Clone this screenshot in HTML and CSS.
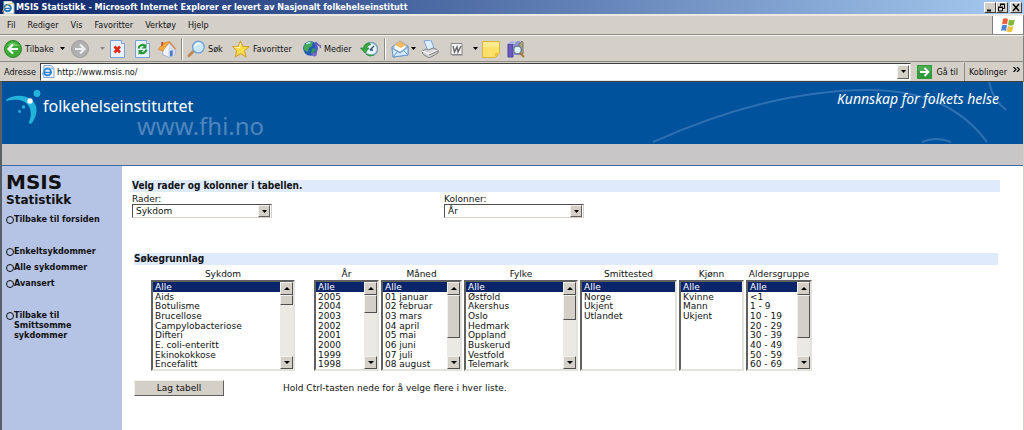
FILE: index.html
```html
<!DOCTYPE html>
<html lang="no">
<head>
<meta charset="utf-8">
<title>MSIS Statistikk</title>
<link rel="stylesheet" href="styles.css">
</head>
<body>
<div class="window">
<header class="titlebar">
  <svg class="title-icon" viewBox="0 0 14 14"><path d="M2 0h8l3 3v11H2z" fill="#fff" stroke="#8aa"/><circle cx="6" cy="7.500" r="3.500" fill="none" stroke="#2878c8" stroke-width="2"/><path d="M3 8h7" stroke="#2878c8" stroke-width="1.500"/><path d="M1 12C0 8 8 1 12 3" fill="none" stroke="#e8b840"/></svg>
  <h1 class="title">MSIS Statistikk - Microsoft Internet Explorer er levert av Nasjonalt folkehelseinstitutt</h1>
  <div class="window-buttons">
    <button class="winbtn" aria-label="Minimer"><svg viewBox="0 0 10 9"><path d="M2 7.500h4" stroke="#000" stroke-width="2"/></svg></button>
    <button class="winbtn" aria-label="Gjenopprett"><svg viewBox="0 0 10 9"><path d="M3.500 3V1.500h4v4H6M1.500 4.500h4v3.500h-4zM1 4h5M3 1h5" fill="none" stroke="#000"/></svg></button>
    <button class="winbtn close" aria-label="Lukk"><svg viewBox="0 0 10 9"><path d="M2 1l6 7M8 1L2 8" stroke="#000" stroke-width="1.500"/></svg></button>
  </div>
</header>
<nav class="menubar">
  <button class="menu">Fil</button><button class="menu">Rediger</button><button class="menu">Vis</button><button class="menu">Favoritter</button><button class="menu">Verktøy</button><button class="menu">Hjelp</button>
  <div class="flag"><svg viewBox="0 0 16 16"><path d="M3 2q2-1.500 5 0L7 7.500q-3-1.500-5 0z" fill="#e8603a"/><path d="M9 2.500q3 1.500 6 0L13.500 8q-3 1.500-5.500 0z" fill="#80b840"/><path d="M2 8.500q2-1.500 5 0L6 14q-3-1.500-5 0z" fill="#4c84d8"/><path d="M8 9q2.500 1.500 5.500 0L12 14.500q-3 1.500-5.500 0z" fill="#f0c040"/></svg></div>
</nav>
<div class="toolbar">
  <button class="tool"><svg viewBox="0 0 18 18"><circle cx="9" cy="9" r="8.500" fill="#3dab35" stroke="#2a8428"/><path d="M3 6q5-7 12 0" fill="#8bd67c" opacity=".6"/><path d="M14 9H5M9 4.500L4.500 9 9 13.500" fill="none" stroke="#fff" stroke-width="2.200"/></svg>Tilbake</button>
  <button class="tool drop" aria-label="Tilbake-meny"><svg viewBox="0 0 5 3"><path d="M0 0h5L2.500 3z"/></svg></button>
  <button class="tool" aria-label="Frem"><svg viewBox="0 0 18 18"><circle cx="9" cy="9" r="8.500" fill="#b0b0b0" stroke="#9c9c9c"/><path d="M4 9h9M9 4.500L13.500 9 9 13.500" fill="none" stroke="#eee" stroke-width="2.200"/></svg></button>
  <button class="tool drop" aria-label="Frem-meny"><svg viewBox="0 0 5 3"><path d="M0 0h5L2.500 3z" fill="#888"/></svg></button>
  <button class="tool" aria-label="Stopp"><svg viewBox="0 0 18 18"><path d="M1.500.5h11l3 3v14h-14z" fill="#e9f3ff" stroke="#7a9fd4"/><path d="M12.500.5v3h3" fill="#fff" stroke="#7a9fd4"/><path d="M5.500 6.500l5.500 6M11 6.500l-5.500 6" stroke="#e02818" stroke-width="2.600"/></svg></button>
  <button class="tool" aria-label="Oppdater"><svg viewBox="0 0 18 18"><path d="M1.500.5h11l3 3v14h-14z" fill="#e9f3ff" stroke="#7a9fd4"/><path d="M12.500.5v3h3" fill="#fff" stroke="#7a9fd4"/><path d="M4.500 8.500C5 5 9 4 11 6M12.500 9.500C12 13 8 14 6 12.500" fill="none" stroke="#28983a" stroke-width="2.200"/><path d="M12.500 3.500v5h-5zM4.500 15v-5h5z" fill="#28983a"/></svg></button>
  <button class="tool" aria-label="Startside"><svg viewBox="0 0 19 18"><path d="M5 9l7-6 6 6v6l-7 2.500L5 15z" fill="#f2f6ff" stroke="#8296c4" stroke-width=".7"/><path d="M12 4l6 5.500V15l-7 2.500V10z" fill="#d0ddf6"/><path d="M0 9.500L6 2.500 12.500 1 7 8.500 5.500 11z" fill="#f5a83c" stroke="#d08028" stroke-width=".6"/><path d="M12 1.200l6.500 8" stroke="#e08a3c" stroke-width="1.500"/><path d="M12.500 11l3-.7v5.500l-3 1z" fill="#5479bd"/><path d="M3.500 1.500h2v3l-2 2z" fill="#b85038"/></svg></button>
  <span class="sep"></span>
  <button class="tool"><svg viewBox="0 0 19 18"><path d="M2 16l5.500-5.500" stroke="#c28a58" stroke-width="3" stroke-linecap="round"/><circle cx="12" cy="7" r="6.200" fill="#c9e8fb" stroke="#6d9ed4" stroke-width="1.300"/><path d="M8.500 6q2-4 6-2" fill="none" stroke="#fff" stroke-width="1.500"/></svg>Søk</button>
  <button class="tool"><svg viewBox="0 0 18 18"><path d="M8.500.8l2.300 5.600 6.400.3-4.800 4 1.800 6.500-5.500-3.600L3.200 17l1.500-6.300L.5 6.600l5.900-.4z" fill="#ffdc48" stroke="#cf9a24"/><path d="M8.500 3l-1 5-5-1" fill="none" stroke="#fff6b4"/></svg>Favoritter</button>
  <button class="tool"><svg viewBox="0 0 18 18"><circle cx="7.500" cy="8.500" r="7.300" fill="#2258b8"/><path d="M1 6q3-6 9-4l-1 4-3 2-1 4-4-2z" fill="#41a854"/><path d="M9 8l4 1-2 4-3 1z" fill="#2f9a50"/><path d="M3.500 4q2-2 4-1" stroke="#bfe8ff" stroke-width="1.500" fill="none"/><path d="M13 14V2q1 3 4.500 4v2" fill="none" stroke="#6a5cc0" stroke-width="1.600"/><ellipse cx="11.300" cy="14.500" rx="2.500" ry="2" fill="#7468cc"/></svg>Medier</button>
  <button class="tool" aria-label="Logg"><svg viewBox="0 0 18 18"><circle cx="11" cy="9" r="6.500" fill="#e6f3fb" stroke="#7aa2bc" stroke-width="1.500"/><path d="M10 3Q4 3 3.500 8H.5l4.500 5 4-5H6.500Q7 5 11 4.500M6 14q3 3.500 8 1" fill="#38a840" stroke="#2c8c38" stroke-width=".8"/><path d="M10 10l4-4M10 10h3" stroke="#34546c" stroke-width="1.300"/></svg></button>
  <span class="sep"></span>
  <button class="tool" aria-label="E-post"><svg viewBox="0 0 18 18"><path d="M1 7l8-6 8 5v9L2 17z" fill="#b4d8f8" stroke="#6a98d0"/><path d="M3 6l6-5 6 4v3l-6 4-6-3z" fill="#fff" stroke="#9ab"/><path d="M4 5l5-4 6 4-5 3z" fill="#f0b860"/><path d="M1 8l8 5 8-6v8L2 17z" fill="#d2eaff" stroke="#6a98d0"/><path d="M2 17l5-6M17 15l-5-5" stroke="#6a98d0"/></svg></button>
  <button class="tool drop" aria-label="E-postmeny"><svg viewBox="0 0 5 3"><path d="M0 0h5L2.500 3z"/></svg></button>
  <button class="tool" aria-label="Skriv ut"><svg viewBox="0 0 18 18"><path d="M3 1l7-1 3 8-6 3z" fill="#dceeff" stroke="#7ba4d8"/><path d="M1 11l4-2 2 1 5-2 5 2v3l-9 5-6-4z" fill="#d6d6d8" stroke="#808084"/><path d="M1 11l7 3 9-4" fill="none" stroke="#fff"/><path d="M8 15l9-4" stroke="#777"/></svg></button>
  <button class="tool" aria-label="Word"><svg viewBox="0 0 18 18"><path d="M3 3.500h11v11H3z" fill="#f5f5f5" stroke="#888"/><path d="M14.500 4.500v11H4" fill="none" stroke="#aaa"/><path d="M5 6l1.500 6L9 7l1 5 3-6" fill="none" stroke="#666" stroke-width="1.400"/></svg></button>
  <button class="tool drop" aria-label="Wordmeny"><svg viewBox="0 0 5 3"><path d="M0 0h5L2.500 3z"/></svg></button>
  <button class="tool" aria-label="Notat"><svg viewBox="0 0 18 18"><path d="M.5 1.500h17v12l-4 4H.5z" fill="#ffe069" stroke="#d9b23e"/><path d="M17 13l-4 4v-4z" fill="#efb93c"/><path d="M1 2h16v5H1z" fill="#fff3a8" opacity=".6"/></svg></button>
  <button class="tool" aria-label="Oppslag"><svg viewBox="0 0 18 18"><path d="M1 4h5v13H1z" fill="#6858c0" stroke="#4b4595"/><path d="M1 4l3-3h4L6 4z" fill="#a8b2e8"/><path d="M7 4l3-3h3v14H7z" fill="#8994d6"/><path d="M12 4l3-3 1 2v11h-4z" fill="#b0a070" stroke="#777"/><circle cx="10.500" cy="10" r="3.800" fill="#dff2ff" stroke="#687898" stroke-width="1.300"/><path d="M13 13l4 4" stroke="#a87830" stroke-width="2"/></svg></button>
</div>
<form class="addressbar">
  <label for="url">Adresse</label>
  <div class="address-box">
    <svg viewBox="0 0 14 14"><path d="M2 .5h8l3 3v10H2z" fill="#eef6ff" stroke="#7a9cc8"/><circle cx="6" cy="7.500" r="3.700" fill="none" stroke="#2a80d0" stroke-width="2"/><path d="M3 8h7" stroke="#2a80d0" stroke-width="1.500"/><path d="M0 11C1 5 9 2 12 4" fill="none" stroke="#5aa8e8"/></svg>
    <input id="url" type="text" value="http://www.msis.no/">
    <button type="button" class="combo-arrow" aria-label="Vis adresser"><svg viewBox="0 0 5 3"><path d="M0 0h5L2.500 3z"/></svg></button>
  </div>
  <button type="button" class="go"><svg viewBox="0 0 15 14"><path d="M0 0h15v14H0z" fill="#2f9a3a"/><path d="M1 1h13v5H1z" fill="#62bb60" opacity=".5"/><path d="M3 7h8M7.500 3L11.500 7l-4 4" fill="none" stroke="#fff" stroke-width="1.800"/></svg>Gå til</button>
  <button type="button" class="links">Koblinger<svg viewBox="0 0 7 5"><path d="M.5 0L3 2.500.5 5M4 0l2.500 2.500L4 5" fill="none" stroke="#000" stroke-width="1.200"/></svg></button>
</form>
<div class="page">
  <div class="banner">
    <svg class="mark" viewBox="0 0 36 36"><path d="M1 11C9 5 20 6 27 11c6 6 6 14 0 23-1 1-4 1-3-1 3-7 2-13-1-17-5-6-12-6-22-4z" fill="#22b5dc"/><circle cx="32" cy="4.500" r="3.400" fill="#22b5dc"/><circle cx="25" cy="12" r="2.700" fill="#fff"/><circle cx="18.500" cy="18" r="1.700" fill="#22b5dc"/><circle cx="14.500" cy="22.500" r="1.400" fill="#22b5dc"/></svg>
    <div class="brand"><span class="name">folkehelseinstituttet</span><span class="site">www.fhi.no</span></div>
    <div class="slogan-area">
      <svg class="arcs" viewBox="0 0 370 62"><path d="M0 60C90 20 160 8 215 8c60 0 95 20 119 52M269 60q14-6 29 0M336 0q4 18 17 28" fill="none" stroke="#2f70b2" stroke-width="2"/></svg>
      <span class="slogan">Kunnskap for folkets helse</span>
    </div>
  </div>
  <div class="strip"></div>
  <div class="body">
    <aside class="sidebar">
      <h2>MSIS</h2>
      <h3>Statistikk</h3>
      <ul>
        <li class="apart"><a href="#">Tilbake til forsiden</a></li>
        <li><a href="#">Enkeltsykdommer</a></li>
        <li><a href="#">Alle sykdommer</a></li>
        <li class="apart"><a href="#">Avansert</a></li>
        <li><a href="#">Tilbake til<br>Smittsomme<br>sykdommer</a></li>
      </ul>
    </aside>
    <main class="content">
      <h2 class="bar">Velg rader og kolonner i tabellen.</h2>
      <div class="axes">
        <div class="axis"><label for="rader">Rader:</label>
          <div class="combo"><select id="rader"><option>Sykdom</option></select><span class="combo-arrow"><svg viewBox="0 0 5 3"><path d="M0 0h5L2.500 3z"/></svg></span></div></div>
        <div class="axis"><label for="kolonner">Kolonner:</label>
          <div class="combo"><select id="kolonner"><option>År</option></select><span class="combo-arrow"><svg viewBox="0 0 5 3"><path d="M0 0h5L2.500 3z"/></svg></span></div></div>
      </div>
      <div class="basis">
      <h2 class="bar">Søkegrunnlag</h2>
      <div class="lists">
        <div class="field"><label for="l1">Sykdom</label><div class="listbox"><select id="l1" multiple><option selected>Alle<option>Aids<option>Botulisme<option>Brucellose<option>Campylobacteriose<option>Difteri<option>E. coli-enteritt<option>Ekinokokkose<option>Encefalitt</select><div class="scroll"><i class="up"></i><i class="thumb short"></i><i class="down"></i></div></div></div>
        <div class="field"><label for="l2">År</label><div class="listbox"><select id="l2" multiple><option selected>Alle<option>2005<option>2004<option>2003<option>2002<option>2001<option>2000<option>1999<option>1998</select><div class="scroll"><i class="up"></i><i class="thumb medium"></i><i class="down"></i></div></div></div>
        <div class="field"><label for="l3">Måned</label><div class="listbox"><select id="l3" multiple><option selected>Alle<option>01 januar<option>02 februar<option>03 mars<option>04 april<option>05 mai<option>06 juni<option>07 juli<option>08 august</select><div class="scroll"><i class="up"></i><i class="thumb long"></i><i class="down"></i></div></div></div>
        <div class="field"><label for="l4">Fylke</label><div class="listbox"><select id="l4" multiple><option selected>Alle<option>Østfold<option>Akershus<option>Oslo<option>Hedmark<option>Oppland<option>Buskerud<option>Vestfold<option>Telemark</select><div class="scroll"><i class="up"></i><i class="thumb middle"></i><i class="down"></i></div></div></div>
        <div class="field"><label for="l5">Smittested</label><div class="listbox"><select id="l5" multiple><option selected>Alle<option>Norge<option>Ukjent<option>Utlandet</select></div></div>
        <div class="field"><label for="l6">Kjønn</label><div class="listbox"><select id="l6" multiple><option selected>Alle<option>Kvinne<option>Mann<option>Ukjent</select></div></div>
        <div class="field"><label for="l7">Aldersgruppe</label><div class="listbox"><select id="l7" multiple><option selected>Alle<option>&lt;1<option>1 - 9<option>10 - 19<option>20 - 29<option>30 - 39<option>40 - 49<option>50 - 59<option>60 - 69</select><div class="scroll"><i class="up"></i><i class="thumb long"></i><i class="down"></i></div></div></div>
      </div>
      <div class="submit"><button type="button" class="make">Lag tabell</button><p>Hold Ctrl-tasten nede for å velge flere i hver liste.</p></div>
      </div>
    </main>
  </div>
</div>
</div>
</body>
</html>
```
FILE: styles.css
```css
* { box-sizing: border-box; }
body, h1, h2, h3, ul, p { margin: 0; padding: 0; }
body { background: #fff; color: #111; font: 9px/12px "DejaVu Sans", sans-serif; }
svg { display: block; flex: none; }
button, input, select { font: inherit; color: inherit; padding: 0; margin: 0; border: 0; border-radius: 0; background: none; }
.window { min-height: 100vh; display: flex; flex-direction: column; }

.titlebar { display: flex; align-items: center; height: 14px; padding: 0 2px; background: linear-gradient(90deg, #0a246a, #a6caf0); color: #fff; }
.title-icon { width: 13px; height: 13px; }
.title { flex: 1; padding-left: 1px; font: bold 9px/14px "DejaVu Sans Condensed", sans-serif; white-space: nowrap; }
.window-buttons { display: flex; }
.winbtn { display: grid; place-items: center; width: 12px; height: 11px; background: #d4d0c8; border: 1px solid; border-color: #fff #404040 #404040 #fff; }
.winbtn svg { width: 10px; height: 9px; }
.winbtn.close { margin-left: 2px; }

.menubar, .toolbar, .addressbar { background: #d4d0c8; font: 9px/12px "DejaVu Sans Condensed", sans-serif; border-right: 1px solid #808080; }
.menubar { display: flex; align-items: center; gap: 12px; height: 21px; padding-left: 7px; border-top: 2px solid #ece9e2; border-bottom: 1px solid #8c8a84; }
.flag { align-self: stretch; display: grid; place-items: center; width: 31px; margin-left: auto; background: #fff; border-left: 1px solid #808080; }
.flag svg { width: 16px; height: 16px; }
.toolbar { display: grid; grid-template-columns: 50px 17px 24px 14px 25px 24px 23px 6px 45px 71px 57px 24px 7px 15px 15px 27px 21px 13px 25px 20px; align-items: center; height: 26px; padding-left: 4px; border-top: 1px solid #f4f2ee; }
.tool { display: flex; align-items: center; gap: 3px; white-space: nowrap; }
.tool svg { width: 18px; height: 18px; }
.tool.drop { justify-content: center; }
.tool.drop svg, .combo-arrow svg { width: 5px; height: 3px; }
.sep { width: 2px; height: 22px; border-left: 1px solid #8c8a84; border-right: 1px solid #fff; }
.addressbar { display: flex; align-items: center; height: 20px; padding-left: 4px; border-top: 1px solid #8c8a84; }
.address-box { flex: 1; display: flex; align-items: center; height: 18px; margin-left: 4px; padding: 1px; background: #fff; border: 1px solid; border-color: #404040 #e8e6e0 #e8e6e0 #404040; }
.address-box > svg { width: 13px; height: 13px; margin-right: 2px; }
.address-box input { flex: 1; min-width: 0; outline: 0; }
.combo-arrow { display: grid; place-items: center; align-self: stretch; width: 12px; background: #d4d0c8; border: 1px solid; border-color: #f4f2ee #606060 #606060 #f4f2ee; }
.go, .links { display: flex; align-items: center; white-space: nowrap; }
.go { gap: 4px; margin-left: 6px; padding-right: 6px; height: 18px; border-right: 1px solid #8c8a84; }
.go svg { width: 15px; height: 14px; }
.links { gap: 6px; padding: 0 3px 0 4px; }
.links svg { width: 7px; height: 5px; margin-bottom: 4px; }

.page { flex: 1; display: flex; flex-direction: column; border-top: 1px solid #404040; border-left: 2px solid #5a6068; border-right: 1px solid #d4d0c8; }
.banner { display: flex; height: 62px; background: #00529c; color: #fff; overflow: hidden; }
.mark { width: 36px; height: 36px; margin: 7px 0 0 3px; }
.brand { display: flex; flex-direction: column; padding: 15px 0 0 2px; font-family: "Noto Sans", sans-serif; }
.name { font-size: 16px; line-height: 19px; }
.site { padding-left: 94px; font-size: 24px; line-height: 19px; color: #4f86bf; }
.slogan-area { display: grid; margin-left: auto; width: 370px; }
.slogan-area > * { grid-area: 1 / 1; }
.arcs { width: 370px; height: 62px; }
.slogan { justify-self: end; padding: 7px 24px 0 0; font: italic 14px/20px "Noto Sans", sans-serif; z-index: 1; }
.strip { height: 22px; background: #c9c6c7; border-bottom: 1px solid #3d6ba5; }
.body { flex: 1; display: flex; }
.sidebar { width: 120px; padding: 6px 4px; background: #b5c3e4; font-weight: bold; }
.sidebar h2 { font-size: 20px; line-height: 20px; }
.sidebar h3 { font-size: 12px; line-height: 17px; }
.sidebar ul { list-style: none; margin-top: 5px; font-family: "DejaVu Sans Condensed", sans-serif; }
.sidebar li { position: relative; padding-left: 8px; margin-bottom: 6px; line-height: 10px; }
.sidebar li.apart { margin-bottom: 22px; }
.sidebar li::before { content: ""; position: absolute; left: 0; top: 2px; width: 6px; height: 6px; border: 1px solid #111; border-radius: 50%; }
a { color: inherit; text-decoration: none; }

.content { flex: 1; padding: 14px 23px 0 10px; }
.bar { background: #dfebfd; font: bold 10px/12px "DejaVu Sans Condensed", sans-serif; }
.axes { display: flex; padding-top: 3px; }
.axis { width: 312px; }
.axis label { display: block; line-height: 9px; }
.combo { display: flex; width: 140px; height: 14px; padding-right: 1px; border: 1px solid; border-color: #505050 #d4d0c8 #d4d0c8 #505050; }
.combo select { flex: 1; appearance: none; height: 12px; padding-left: 3px; line-height: 12px; }
.basis { padding: 35px 2px 0; }
.lists { display: grid; grid-template-columns: 161px 65px 81px 114px 97px 65px 66px; column-gap: 2px; padding: 4px 0 0 17px; }
.field { text-align: center; }
.field:first-child { width: 144px; }
.field label { display: block; line-height: 11px; white-space: nowrap; }
.listbox { display: flex; height: 91px; background: #fff; border: 2px solid; border-color: #606060 #e4e2dc #e4e2dc #606060; text-align: left; }
.listbox select { flex: 1; min-width: 0; height: 87px; overflow: hidden; outline: 0; }
.listbox option { min-height: 0; height: 10px; padding: 0 0 0 2px; line-height: 10px; }
.listbox option:nth-child(3n+2) { height: 9px; line-height: 9px; }
.listbox option:checked { background: #0a246a linear-gradient(#0a246a, #0a246a); color: #fff; }
.scroll { display: flex; flex-direction: column; width: 13px; background: #ebe9e4; }
.scroll i { display: grid; place-items: center; height: 13px; background: #d4d0c8; border: 1px solid; border-color: #f4f2ee #505050 #505050 #f4f2ee; }
.up::before, .down::before { content: ""; border: 3px solid transparent; border-top-width: 0; border-bottom: 3px solid #000; }
.down::before { transform: rotate(180deg); }
.scroll .down { margin-top: auto; }
.scroll .short { height: 10px; }
.scroll .medium { height: 18px; }
.scroll .middle { height: 25px; }
.scroll .long { height: 43px; }
.submit { display: flex; align-items: center; gap: 59px; padding-top: 9px; }
.make { width: 90px; height: 16px; background: #d4d0c8; border: 1px solid; border-color: #f4f2ee #606060 #606060 #f4f2ee; }
```
